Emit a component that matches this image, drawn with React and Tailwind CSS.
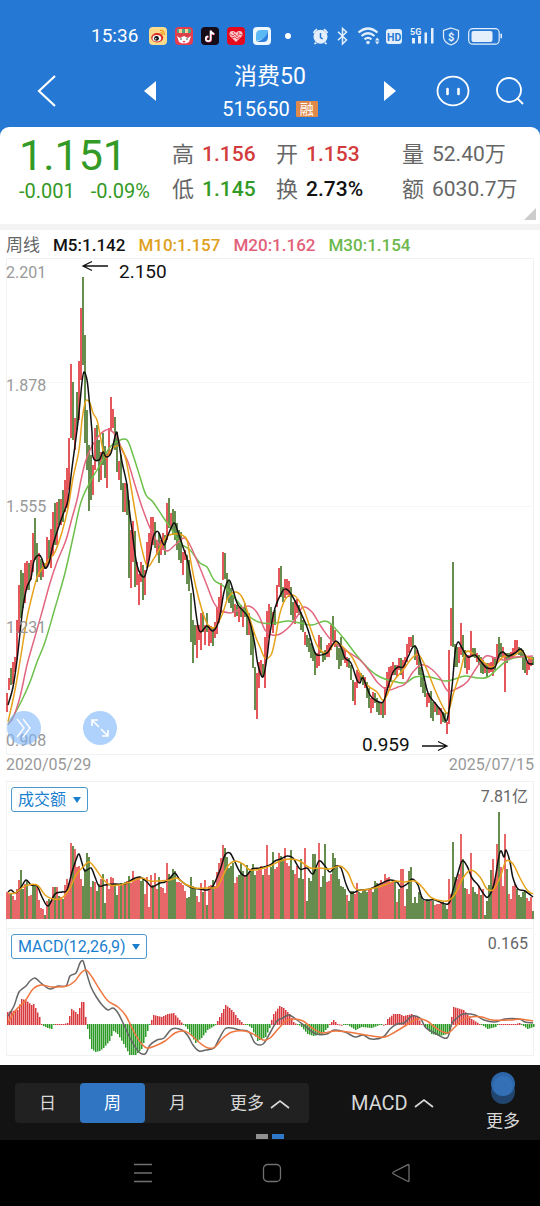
import React from "react";

const RED = "#e5575b";
const GREEN = "#668d4e";

// One entry per week: colour, top and bottom of the candle.
const CANDLES = `R693-712 R678-690 G668-685 R662-684 R657-672 R620-660 R585-633 G570-618 G573-608 R563-603
R561-590 G563-590 R560-580 R533-572 G518-560 G543-582 R553-577 G559-580 R562-577 G563-569
R537-567 G540-563 R529-568 R512-556 G503-545 R502-545 G499-525 R499-525 G490-522 R480-512
R468-508 R438-490 R364-438 G382-440 R418-450 G392-430 R361-420 R308-380 G277-365 G335-443
G410-470 G445-511 G455-500 R465-495 R428-470 G425-460 G440-482 R452-480 G433-465 G446-478
R453-488 R428-455 R397-430 R409-428 G417-450 G432-472 R461-480 G455-490 G483-512 R483-512
G484-515 G500-578 R530-588 R521-562 G531-587 R562-585 R574-605 R562-582 G565-600 R570-595
R542-568 R533-560 R517-550 R517-545 G522-548 R540-555 G533-563 R540-555 R533-550 G535-555
R503-540 G498-528 R513-530 G509-535 G511-540 G523-550 G530-560 G532-563 R552-575 R550-560
G555-584 G560-591 G593-642 G620-663 G625-645 R625-658 R625-640 R613-650 G612-632 R625-645
G613-632 R625-646 R626-643 G627-646 R622-638 R607-634 R597-623 R583-613 R552-580 G553-579
G573-600 G580-603 G588-608 G595-613 R604-617 G605-616 R607-622 G605-617 R608-627 G603-617
G610-635 R613-635 G623-655 G632-668 G667-710 R673-719 R662-688 R660-675 G664-677 R637-688
R611-657 R604-638 G607-623 R612-633 G610-625 R585-607 R568-587 G566-597 G587-602 R579-598
R579-595 R581-597 G587-615 G602-620 R600-624 R599-613 G605-615 G612-630 G620-632 R632-645
G635-647 G638-652 G643-658 G647-661 G652-675 R653-668 R635-666 G637-653 G652-662 G650-660
R645-657 R643-657 R625-650 G616-642 R630-647 G642-660 G648-669 G637-666 G647-660 R650-663
R657-667 G658-668 G665-680 G680-701 R682-705 R670-688 R672-683 G673-680 G675-685 R677-688
G682-698 G688-708 R698-713 R692-708 G693-703 G698-712 G702-715 R703-715 G702-718 R687-715
R672-690 R667-688 R666-682 R662-675 G665-675 R665-677 R658-670 G658-675 R660-679 R657-668
R644-662 R637-653 R637-647 G635-647 G645-660 R650-665 G657-675 G667-687 G673-693 G683-697
R693-707 R693-703 G691-718 G702-721 R702-712 G705-715 R707-715 R708-724 G712-722 G713-723
R722-734 R650-724 R608-646 G562-647 G644-667 G647-667 R647-663 R623-655 G635-657 G650-668
R655-674 R655-670 R631-657 G648-657 G648-658 R653-662 G655-665 G657-673 G660-674 R663-673
G663-678 R663-673 R662-672 R657-676 G657-670 R644-663 G637-658 G643-657 R647-658 R653-692
G653-663 G653-660 R652-658 R648-657 R640-653 R640-652 G647-655 G648-657 G650-670 G657-673
R662-675 R658-670 R657-666 G657-665`;

// Turnover per week: colour and bar height.
const VOLUMES = `R27 R25 G25 R23 R19 R30 R39 G49 G30 R35 G38 R23 R24 G33 G35 R33 R19 R11 R10 G4
R18 G20 R18 R32 G32 R32 G23 R22 G20 R34 R40 R36 R76 G73 R70 R52 R53 R40 G33 G50
G66 G62 R32 G38 R37 G28 G35 R40 G45 G16 R40 R30 R42 R41 G35 G24 R33 G36 R34 G37
R38 G43 R36 R48 R40 R41 R42 G38 G41 R25 R42 R12 R44 G34 R46 R30 G42 R32 R31 R26
R56 G45 G42 G50 G48 R37 R37 R36 R34 R28 G21 G22 G42 G33 G30 R23 R17 R36 G27 R39
G14 R33 R34 G39 R33 R47 R56 R61 R74 G71 G62 G51 G53 G56 R36 R42 G44 G56 G48 R44
G54 R47 G50 G55 G44 R48 R50 R53 G44 R50 R74 R44 G52 G67 R50 R52 R66 G63 G60 R71
R56 R53 G69 G49 R45 R53 G41 G60 G40 R71 G18 G41 G38 G65 G65 G50 R76 G32 G43 G75
R37 R38 R45 G66 G61 G52 G40 G33 G32 G30 R24 G18 G28 G28 R25 R36 G27 G26 G28 G30
G27 R30 R30 G27 G38 G36 R35 R39 R36 R45 R41 R42 R37 R38 G38 R17 G30 R50 R50 R13
G30 G48 G52 G16 G22 G16 G27 G23 G19 R18 G20 G19 R18 G18 R14 R15 R15 R16 G17 G14
G10 R40 R25 G77 G42 R40 R45 R85 G60 G31 R30 R25 R66 G32 G27 G25 R33 G24 R30 G4
G18 G34 G49 R60 R40 R75 G107 R52 R33 R85 G50 R25 R20 R33 R35 G30 G24 G22 G27 G28
R21 R18 R22 G8`;

// Turning points of the MACD histogram: week index and signed bar height.
const HISTOGRAM = [
  [0, 13], [5, 15], [7, 26], [9, 25], [12, 20], [13, 21], [14, 17], [16, 8], [17, 1], [18, -2], [20, -4], [22, -5],
  [23, -1], [24, 1], [28, 1], [30, 2], [32, 16], [34, 13], [35, 11], [37, 23], [38, 23], [39, 8], [40, -5], [42, -25],
  [44, -28], [46, -27], [48, -24], [51, -17], [53, -7], [55, -10], [58, -20], [61, -31], [64, -31], [67, -25],
  [69, -13], [71, -1], [72, 5], [73, 10], [77, 8], [80, 11], [83, 12], [86, 5], [88, 0], [90, -5], [94, -19],
  [97, -14], [100, -6], [104, -1], [105, 4], [107, 12], [109, 20], [111, 17], [113, 13], [115, 7], [118, 1],
  [120, -1], [122, -4], [125, -17], [129, -13], [131, -4], [132, 5], [133, 11], [136, 19], [138, 17], [141, 11],
  [143, 3], [145, 0], [147, -3], [150, -10], [153, -12], [157, -10], [160, -4], [161, 1], [163, 5], [165, 1],
  [170, -1], [174, -6], [177, -3], [182, -4], [186, -1], [189, 1], [190, 6], [193, 11], [196, 11], [198, 9],
  [202, 11], [205, 8], [207, 1], [209, -3], [212, -10], [216, -12], [220, -10], [221, -8], [222, 8], [223, 18],
  [228, 15], [232, 6], [236, 1], [240, -5], [244, -3], [246, 1], [251, 1], [254, 1], [256, 2], [258, -2],
  [260, -5], [263, -3],
];

const M5 = "8,705 13,687 17,660 20,633 23,607 27,587 31,578 34,561 39,555 42,559 45,568 49,563 53,545 60,523 64,512 68,500 72,468 78,422 82,382 84,372 87,380 89,398 92,432 93,457 99,460 103,452 106,457 111,453 116,433 118,438 122,462 127,485 129,507 132,530 137,565 144,577 149,560 153,538 156,532 159,533 164,545 168,535 174,523 178,532 183,547 188,562 193,590 199,630 207,626 213,631 219,620 224,592 229,580 233,590 238,605 248,617 254,640 258,665 263,677 267,657 270,633 275,608 282,592 286,589 291,594 297,605 307,627 313,647 317,655 327,653 331,647 336,641 341,647 345,658 351,663 357,680 360,683 363,678 370,695 375,700 383,702 388,687 393,672 398,667 403,667 408,657 413,647 417,649 422,668 428,693 435,703 442,712 447,720 452,687 455,653 458,642 462,648 468,657 475,655 482,663 487,668 495,667 499,655 503,652 508,656 515,653 520,649 524,653 528,663 533,664";
const M10 = "8,722 15,690 21,655 27,618 33,592 38,575 45,565 50,558 55,552 62,532 68,508 73,478 79,450 82,420 85,403 87,400 90,403 93,413 97,420 100,435 103,450 106,458 111,450 116,446 121,447 126,460 131,487 136,517 141,545 147,566 153,560 160,548 166,537 173,534 182,535 187,540 190,557 195,583 202,610 208,625 215,627 222,615 228,598 235,592 242,597 248,613 255,635 260,647 265,658 271,655 275,640 280,613 287,597 295,596 303,608 310,627 318,647 327,653 335,643 343,647 352,657 360,673 367,685 377,692 384,700 393,682 403,670 412,658 419,655 427,670 435,690 443,707 448,713 453,695 460,673 466,652 475,655 485,663 493,667 503,657 515,655 521,651 527,657 533,659";
const M20 = "8,724 13,718 20,697 27,665 34,640 42,612 50,583 57,562 66,540 72,518 77,500 81,480 85,463 90,450 97,438 104,431 110,430 117,437 122,450 128,462 135,485 142,507 150,528 158,543 167,551 175,545 184,538 190,545 198,563 206,583 214,603 220,610 230,613 238,610 248,606 255,610 260,618 265,630 272,635 280,634 290,626 298,615 303,607 312,612 322,628 332,641 345,650 360,660 370,672 378,683 388,690 398,687 405,684 413,672 421,665 430,668 440,678 448,691 458,688 467,682 477,667 486,656 495,658 505,660 515,657 533,656";
const M30 = "8,725 14,715 22,700 30,682 37,662 45,642 55,608 65,573 74,533 81,502 90,482 100,465 110,447 118,441 127,440 133,455 140,477 146,495 153,502 163,517 172,530 180,543 190,550 200,563 207,567 214,580 222,585 228,590 238,602 250,617 262,623 275,623 288,621 300,623 312,625 325,621 332,625 345,640 358,657 370,670 380,677 392,681 405,683 415,677 430,677 445,681 455,679 465,676 478,678 488,677 498,668 508,660 520,657 533,658";
const VOL5 = "8,892 11,890 15,893 20,889 26,880 31,885 37,886 42,897 48,906 55,894 62,892 67,890 72,872 76,860 79,854 82,863 85,871 91,868 95,877 99,886 105,885 115,884 125,884 133,879 140,877 147,882 152,887 160,883 165,882 170,878 175,873 180,880 190,887 200,889 207,890 213,886 220,870 225,855 230,853 234,860 240,872 246,876 252,869 260,868 270,865 275,861 281,859 287,856 293,858 300,869 307,868 313,874 319,861 325,866 330,872 336,866 341,868 346,884 351,893 360,890 370,889 380,884 390,880 397,882 401,887 407,884 412,879 418,885 423,899 435,900 448,904 453,890 458,873 462,861 467,866 472,878 478,885 483,893 488,897 494,884 500,852 504,857 506,850 510,862 513,878 518,889 525,891 533,897";
const VOL10 = "8,893 15,893 25,886 37,885 45,895 53,899 62,898 70,888 76,875 83,867 89,862 95,868 102,878 110,885 120,885 130,882 142,878 150,881 160,881 170,880 177,878 185,884 195,888 208,888 217,887 222,878 228,866 235,861 243,864 250,870 260,869 270,866 280,861 290,859 300,861 310,868 320,868 330,869 340,866 348,873 356,889 370,889 385,885 395,881 405,882 415,881 423,888 432,898 447,901 455,894 463,878 471,870 480,877 487,889 494,889 501,875 506,861 513,864 520,878 527,890 533,894";
const DIF = "8,1015 14,1005 19,991 26,985 30,980 35,977 41,982 50,988 58,985 66,985 70,975 76,972 80,962 83,960 86,970 91,986 97,997 103,1005 108,1009 113,1007 118,1012 124,1024 130,1037 138,1050 145,1053 150,1044 157,1039 164,1037 172,1028 182,1029 188,1035 193,1044 199,1050 206,1049 214,1047 219,1038 225,1028 231,1027 240,1029 249,1031 255,1042 263,1043 270,1032 277,1020 283,1017 289,1014 297,1019 305,1025 316,1033 327,1033 334,1029 345,1031 355,1036 363,1034 371,1038 383,1036 390,1028 397,1023 404,1022 412,1015 420,1017 426,1027 435,1032 447,1037 452,1022 457,1017 463,1013 475,1014 484,1019 495,1021 505,1018 519,1018 525,1021 533,1022";
const DEA = "8,1022 15,1010 25,1000 33,988 41,984 52,986 67,985 75,980 81,972 86,969 92,976 100,989 108,1000 118,1006 126,1015 134,1031 141,1042 147,1047 155,1045 165,1040 175,1032 184,1030 191,1034 200,1042 208,1047 215,1046 223,1037 232,1031 245,1030 255,1034 263,1039 270,1037 278,1028 286,1020 294,1018 303,1020 312,1027 322,1032 335,1030 348,1031 360,1033 372,1035 385,1036 395,1031 405,1025 417,1018 427,1020 436,1027 447,1032 454,1027 462,1019 470,1016 482,1016 492,1019 510,1019 520,1018 533,1020";

function smooth(text) {
  const p = text.split(" ").map((s) => s.split(",").map(Number));
  let d = `M${p[0][0]} ${p[0][1]}`;
  for (let i = 0; i < p.length - 1; i++) {
    const a = p[i - 1] || p[i];
    const b = p[i];
    const c = p[i + 1];
    const e = p[i + 2] || c;
    d += `C${b[0] + (c[0] - a[0]) / 6} ${b[1] + (c[1] - a[1]) / 6} ${c[0] - (e[0] - b[0]) / 6} ${c[1] - (e[1] - b[1]) / 6} ${c[0]} ${c[1]}`;
  }
  return d;
}

function Curve({ points, color, width = 1.5 }) {
  return <path d={smooth(points)} fill="none" stroke={color} strokeWidth={width} strokeLinejoin="round" />;
}

function histogramBars() {
  const bars = [];
  for (let k = 0; k < HISTOGRAM.length - 1; k++) {
    const [i0, v0] = HISTOGRAM[k];
    const [i1, v1] = HISTOGRAM[k + 1];
    for (let i = i0; i < i1; i++) bars.push(v0 + ((v1 - v0) * (i - i0)) / (i1 - i0));
  }
  bars.push(HISTOGRAM[HISTOGRAM.length - 1][1]);
  return bars;
}

function PriceChart() {
  const candles = CANDLES.split(/\s+/).map((s) => [s[0], ...s.slice(1).split("-").map(Number)]);
  return (
    <svg viewBox="7 259 526 495" className="block w-full overflow-visible" role="img" aria-label="周线K线图">
      <path d="M7 382.500H533M7 506.500H533M7 630.500H533" stroke="#f7f7f7" />
      {candles.map(([c, top, bottom], i) => (
        <rect key={i} x={6 + 2 * i} y={top} width="2" height={bottom - top} fill={c === "R" ? RED : GREEN} />
      ))}
      <Curve points={M30} color="#6cc04a" />
      <Curve points={M20} color="#e2667f" />
      <Curve points={M10} color="#e6a21a" />
      <Curve points={M5} color="#111111" />
      <g fill="#999999" fontSize="16" className="font-[Roboto,sans-serif]">
        <text x="6" y="278">2.201</text>
        <text x="6" y="391">1.878</text>
        <text x="6" y="512">1.555</text>
        <text x="6" y="633">1.231</text>
        <text x="6" y="746">0.908</text>
      </g>
      <g fill="#111111" fontSize="19" className="font-[Roboto,sans-serif]">
        <text x="119" y="278">2.150</text>
        <text x="362" y="751">0.959</text>
      </g>
      <path d="M108 266H83M92 261.500L83 266L92 270.500M422 746H447M438 741.500L447 746L438 750.500" fill="none" stroke="#111111" strokeWidth="1.300" />
    </svg>
  );
}

function VolumeChart() {
  const volumes = VOLUMES.split(/\s+/).map((s) => [s[0], Number(s.slice(1))]);
  return (
    <svg viewBox="7 812 526 116" className="block w-full overflow-visible" role="img" aria-label="成交额">
      <path d="M7 850.500H533" stroke="#f7f7f7" />
      {volumes.map(([c, h], i) => (
        <rect key={i} x={6 + 2 * i} y={919 - h} width="2" height={h} fill={c === "R" ? "#e86768" : GREEN} />
      ))}
      <Curve points={VOL5} color="#111111" />
      <Curve points={VOL10} color="#e6a21a" />
    </svg>
  );
}

function MacdChart() {
  return (
    <svg viewBox="7 958 526 96" className="block w-full overflow-visible" role="img" aria-label="MACD">
      <path d="M7 991.500H533" stroke="#f7f7f7" />
      {histogramBars().map((v, i) => (
        <rect key={i} x={7 + 2 * i} y={v > 0 ? 1024 - v : 1023} width="1.500" height={Math.max(1, Math.abs(v))} fill={v > 0 ? "#d8393c" : "#2c9a26"} />
      ))}
      <Curve points={DIF} color="#666666" />
      <Curve points={DEA} color="#f0773f" />
    </svg>
  );
}

function AppIcons() {
  return (
    <div className="flex gap-2" aria-hidden="true">
      <svg width="18" height="18" viewBox="0 0 18 18">
        <rect width="18" height="18" rx="4" fill="#fbdc8c" />
        <ellipse cx="8.200" cy="10.700" rx="6" ry="4.700" fill="#d92b22" />
        <ellipse cx="7.800" cy="11.200" rx="4.300" ry="3.300" fill="#fff" />
        <circle cx="7.500" cy="11.400" r="2.400" fill="#111" />
        <circle cx="6.800" cy="11.800" r=".8" fill="#fff" />
        <path d="M11 3.500Q15.500 3 15.300 8M11.500 5.700Q13.500 5.500 13.300 7.600" fill="none" stroke="#f19a1d" strokeWidth="1.300" />
      </svg>
      <svg width="18" height="18" viewBox="0 0 18 18">
        <rect width="18" height="18" rx="4" fill="#e83c4f" />
        <rect x="2" y="2" width="14" height="4" rx="1" fill="#4fa58a" />
        <path d="M4 2h3v4H4zM10 2h3v4h-3z" fill="#f6d38f" />
        <path d="M2 9Q9 4 16 9L14 15Q9 18 4 15Z" fill="#fff" />
        <path d="M2 9Q3 6 6 7Q9 5 12 7Q15 6 16 9L13 11L9 9L5 11Z" fill="#d8404a" />
        <path d="M5 12h2M11 12h2" stroke="#555" />
        <path d="M7.500 14h3L9 16z" fill="#e83c4f" />
      </svg>
      <svg width="18" height="18" viewBox="0 0 18 18">
        <rect width="18" height="18" rx="4" fill="#160b18" />
        <path d="M9.600 3.500v8.300a2.400 2.400 0 1 1-2.400-2.400M9.600 3.500q.5 3 3.600 3.400" fill="none" stroke="#ff3b5c" strokeWidth="1.800" transform="translate(.5 .4)" />
        <path d="M9.600 3.500v8.300a2.400 2.400 0 1 1-2.400-2.400M9.600 3.500q.5 3 3.600 3.400" fill="none" stroke="#fff" strokeWidth="1.800" />
      </svg>
      <svg width="18" height="18" viewBox="0 0 18 18">
        <rect width="18" height="18" rx="4" fill="#e50a1d" />
        <path d="M9 15L3 9Q1.500 6 4 4.300Q7 3 9 5.800Q11 3 14 4.300Q16.500 6 15 9Z" fill="#f9c9cb" />
        <path d="M3 7l3 2 2-2 2 3 2-3 3 1M5 11l3-1 2 2 3-2M6 5l1 2M12 5l-1 2" fill="none" stroke="#e50a1d" strokeWidth=".7" />
      </svg>
      <svg width="18" height="18" viewBox="0 0 18 18">
        <rect width="18" height="18" rx="4" fill="#eef7fd" />
        <path d="M3 14V8Q3 3 8 3H15V4Q14 11 7 13Z" fill="#5ab8f5" />
        <path d="M15 4V10Q15 15 10 15H3.500Q13 12 15 4Z" fill="#2b7fe0" />
      </svg>
    </div>
  );
}

function SystemIcons() {
  return (
    <svg width="192" height="24" viewBox="310 24 192 24" aria-hidden="true">
      <g fill="#e4effb">
        <circle cx="319.500" cy="36.800" r="7" />
        <path d="M311.800 32.500a9 9 0 0 1 3.900-4l.9 1.500a9 9 0 0 0-3.300 3.400zM327.200 32.500a9 9 0 0 0-3.900-4l-.9 1.500a9 9 0 0 1 3.300 3.400zM314 42l-1 2 1 .6 2-1.400zM325 42l1 2-1 .6-2-1.400z" />
        <rect x="385" y="29" width="16" height="15" rx="3" />
        <path d="M411 38h3v5.500h-3zM417 36h3v7.500h-3zM423.500 32.500h2.500v11h-2.500zM430 28h2.500v15.500H430z" />
        <rect x="470.500" y="31" width="21" height="11" rx="2" />
        <rect x="499.500" y="33.500" width="1.500" height="5" rx=".7" />
        <circle cx="367" cy="42.500" r="1.800" />
        <path d="M374 40.500l2.200-3 2.200 3zM374 41.500l2.200 3 2.200-3z" />
      </g>
      <g fill="none" stroke="#e4effb" strokeWidth="1.500">
        <path d="M337 31.800l8.500 8.200-4 4V28.500l4 3.500-8.500 8.200" />
        <path d="M357.500 32.500q9.500-8 19 0M360.500 36q6.500-5.500 13 0M363.500 39.300q3.500-3 7 0" strokeWidth="2.200" />
        <path d="M450 28l7.500 2.500v6q0 6-7.500 8.500q-7.500-2.500-7.500-8.500v-6z" strokeWidth="1.200" />
        <rect x="467.700" y="28.700" width="30.500" height="15.500" rx="4" strokeWidth="1.200" />
      </g>
      <path d="M319.500 33v4.500l2.200 1.500" fill="none" stroke="#2578d4" strokeWidth="1.500" />
      <g className="font-[Roboto,sans-serif] font-bold">
        <text x="386" y="40.500" fontSize="10.500" fill="#2578d4">HD</text>
        <text x="409" y="35" fontSize="9" fill="#e4effb">5G</text>
        <text x="447" y="40.500" fontSize="11" fill="#e4effb">$</text>
      </g>
    </svg>
  );
}

function Quote({ label, value, tone }) {
  return (
    <div className="flex items-center gap-2 whitespace-nowrap">
      <dt className="text-[22px] text-[#666666]">{label}</dt>
      <dd className={tone}>{value}</dd>
    </div>
  );
}

function Picker({ id, label, text, value }) {
  return (
    <div className="flex h-[30px] items-start justify-between pt-[5px] pr-[5px] pl-1">
      <div className="flex h-[25px] items-center gap-1.5 rounded-[3px] border border-[#4a98cc] px-1.5 text-[#1b7fd0]">
        <select id={id} aria-label={label} className="h-full cursor-pointer appearance-none bg-transparent text-base">
          <option>{text}</option>
        </select>
        <svg width="8" height="6" viewBox="0 0 8 6" aria-hidden="true">
          <path d="M0 0H8L4 6Z" fill="currentColor" />
        </svg>
      </div>
      <span className="text-base leading-5 text-[#666666]">{value}</span>
    </div>
  );
}

function UpChevron() {
  return (
    <svg width="20" height="10" viewBox="0 0 20 10" aria-hidden="true">
      <path d="M1 9L10 2L19 9" fill="none" stroke="#d8d8d8" strokeWidth="1.700" />
    </svg>
  );
}

export default function App() {
  return (
    <div className="bg-white font-[Roboto,'Noto_Sans_CJK_SC',sans-serif] text-[#111111]">
      <header className="bg-[#2578d4] text-white">
        <div className="flex h-[60px] items-center pt-3 pl-[91px]">
          <time className="w-[58px] text-[19px]">15:36</time>
          <AppIcons />
          <span className="mr-5 ml-[14px] size-1.5 rounded-full bg-white" />
          <SystemIcons />
        </div>
        <div className="flex h-[67px] items-start pr-1">
          <button aria-label="返回" className="flex h-[62px] w-[94px] items-center justify-center">
            <svg width="20" height="34" viewBox="0 0 20 34">
              <path d="M18 2L2 17L18 32" fill="none" stroke="#fff" strokeWidth="2.200" />
            </svg>
          </button>
          <button aria-label="上一只" className="ml-6 flex h-[62px] w-16 items-center justify-center">
            <svg width="12" height="20" viewBox="0 0 12 20"><path d="M12 0V20L0 10Z" fill="#fff" /></svg>
          </button>
          <div className="flex flex-1 flex-col items-center pt-px">
            <h1 className="text-[23px] leading-8">消费50</h1>
            <p className="flex items-center gap-1.5 text-[20px] leading-8">
              515650
              <span className="rounded-[1px] bg-[#e0894a] px-1 text-[14px] leading-4">融</span>
            </p>
          </div>
          <button aria-label="下一只" className="flex h-[62px] w-16 items-center justify-center">
            <svg width="12" height="20" viewBox="0 0 12 20"><path d="M0 0V20L12 10Z" fill="#fff" /></svg>
          </button>
          <button aria-label="智能助手" className="flex h-[62px] w-[62px] items-center justify-center">
            <svg width="34" height="32" viewBox="0 0 34 32" fill="none" stroke="#fff">
              <ellipse cx="17" cy="16" rx="15.500" ry="14.300" strokeWidth="1.800" />
              <path d="M11.500 14v5M22.500 14v5" strokeWidth="2.600" strokeLinecap="round" />
            </svg>
          </button>
          <button aria-label="搜索" className="flex h-[62px] w-[52px] items-center justify-center">
            <svg width="28" height="28" viewBox="0 0 28 28" fill="none" stroke="#fff" strokeWidth="1.800">
              <circle cx="13" cy="13" r="12" />
              <path d="M21.500 21.500L27 27" />
            </svg>
          </button>
        </div>
      </header>

      <main>
        <div className="bg-[#2578d4]">
          <section className="relative grid h-[97px] grid-cols-[153fr_104fr_126fr_138fr] rounded-t-[9px] bg-white pl-[19px]">
            <div className="whitespace-nowrap text-[#339a25]">
              <p className="pt-2 text-[43px] leading-10">1.151</p>
              <p className="flex gap-4 pt-1 text-[20px] leading-6">
                <span>-0.001</span>
                <span>-0.09%</span>
              </p>
            </div>
            <dl className="pt-2.5 text-[21px] leading-[35px]">
              <Quote label="高" value="1.156" tone="font-medium text-[#d23c3c]" />
              <Quote label="低" value="1.145" tone="font-medium text-[#339a25]" />
            </dl>
            <dl className="pt-2.5 text-[21px] leading-[35px]">
              <Quote label="开" value="1.153" tone="font-medium text-[#d23c3c]" />
              <Quote label="换" value="2.73%" tone="font-medium text-[#111111]" />
            </dl>
            <dl className="pt-2.5 text-[21px] leading-[35px]">
              <Quote label="量" value="52.40万" tone="text-[#666666]" />
              <Quote label="额" value="6030.7万" tone="text-[#666666]" />
            </dl>
            <svg width="12" height="12" viewBox="0 0 12 12" className="absolute right-1 bottom-1" aria-hidden="true">
              <path d="M12 0V12H0Z" fill="#cccccc" />
            </svg>
          </section>
        </div>
        <div className="h-1.5 bg-[#f3f3f3]" />

        <div className="flex h-7 items-center gap-[13px] pt-1 pl-1.5 text-[17px] font-medium whitespace-nowrap">
          <span className="font-normal text-[#666666]">周线</span>
          <span>M5:1.142</span>
          <span className="text-[#dfa01c]">M10:1.157</span>
          <span className="text-[#e2607a]">M20:1.162</span>
          <span className="text-[#6cb84c]">M30:1.154</span>
        </div>

        <section className="relative mx-1.5 border border-[#f2f2f2]">
          <PriceChart />
          <button aria-label="展开" className="absolute bottom-[9px] left-0 flex size-[34px] items-center justify-center rounded-full bg-[#7fb6f8]/60">
            <svg width="18" height="20" viewBox="0 0 18 20" fill="none" stroke="#fff" strokeWidth="1.400">
              <path d="M2 1L9 10L2 19M8 1L15 10L8 19" />
            </svg>
          </button>
          <button aria-label="全屏" className="absolute bottom-[9px] left-[76px] flex size-[34px] items-center justify-center rounded-full bg-[#aed2fb]">
            <svg width="18" height="18" viewBox="0 0 18 18" fill="none" stroke="#fff" strokeWidth="1.600">
              <path d="M8 8L1 1M1 7V1H7M10 10L17 17M17 11V17H11" />
            </svg>
          </button>
        </section>

        <div className="flex h-[26px] items-start justify-between px-1.5 text-base leading-5 text-[#999999]">
          <time>2020/05/29</time>
          <time>2025/07/15</time>
        </div>

        <section className="mx-1.5 border-x border-t border-[#f2f2f2]">
          <Picker id="volume" label="副图指标一" text="成交额" value="7.81亿" />
          <VolumeChart />
        </section>
        <section className="mx-1.5 mb-[9px] border border-[#f2f2f2]">
          <Picker id="macd" label="副图指标二" text="MACD(12,26,9)" value="0.165" />
          <MacdChart />
        </section>
      </main>

      <footer className="bg-[#131313] text-[#d8d8d8]">
        <div className="flex h-[69px] items-center pt-1.5 pr-5 pl-[15px]">
          <div className="flex h-10 items-stretch rounded bg-[#212121] text-[17px] whitespace-nowrap">
            <button className="w-[65px] pt-0.5">日</button>
            <button aria-pressed="true" className="w-[65px] rounded bg-[#3075c2] pt-0.5 text-white">周</button>
            <button className="w-[65px] pt-0.5">月</button>
            <button aria-haspopup="true" className="flex w-[99px] items-center gap-1.5 pt-0.5 pl-5">
              更多
              <UpChevron />
            </button>
          </div>
          <button aria-haspopup="true" className="ml-[42px] flex items-center gap-1.5 text-xl">
            MACD
            <UpChevron />
          </button>
          <button className="ml-auto flex flex-col items-center text-[17px] leading-6">
            <svg width="24" height="33" viewBox="0 0 24 33" aria-hidden="true">
              <circle cx="12" cy="20" r="12" fill="#21456f" />
              <circle cx="12" cy="12" r="12" fill="#2c66a9" />
              <circle cx="12" cy="14" r="10" fill="#3470b5" />
            </svg>
            <span className="pt-1">更多</span>
          </button>
        </div>
        <div className="flex h-1.5 justify-center gap-1">
          <span className="h-[5px] w-3 bg-[#8f8f8f]" />
          <span className="h-[5px] w-3 bg-[#2e78c8]" />
        </div>
        <nav className="flex h-[66px] items-center justify-around bg-black pr-[75px] pl-[79px]">
          <button aria-label="最近任务">
            <svg width="20" height="20" viewBox="0 0 20 20"><path d="M1 1.500H19M1 10H19M1 18.500H19" stroke="#6f6f6f" strokeWidth="1.300" /></svg>
          </button>
          <button aria-label="主屏幕">
            <svg width="20" height="20" viewBox="0 0 20 20"><rect x="1.500" y="1.500" width="17" height="17" rx="4" fill="none" stroke="#6f6f6f" strokeWidth="1.300" /></svg>
          </button>
          <button aria-label="返回上一页">
            <svg width="20" height="20" viewBox="0 0 20 20"><path d="M18 2.500V17.500Q18 19 16.500 18.200L2.500 11Q1 10 2.500 9L16.500 1.800Q18 1 18 2.500Z" fill="none" stroke="#6f6f6f" strokeWidth="1.300" /></svg>
          </button>
        </nav>
      </footer>
    </div>
  );
}
